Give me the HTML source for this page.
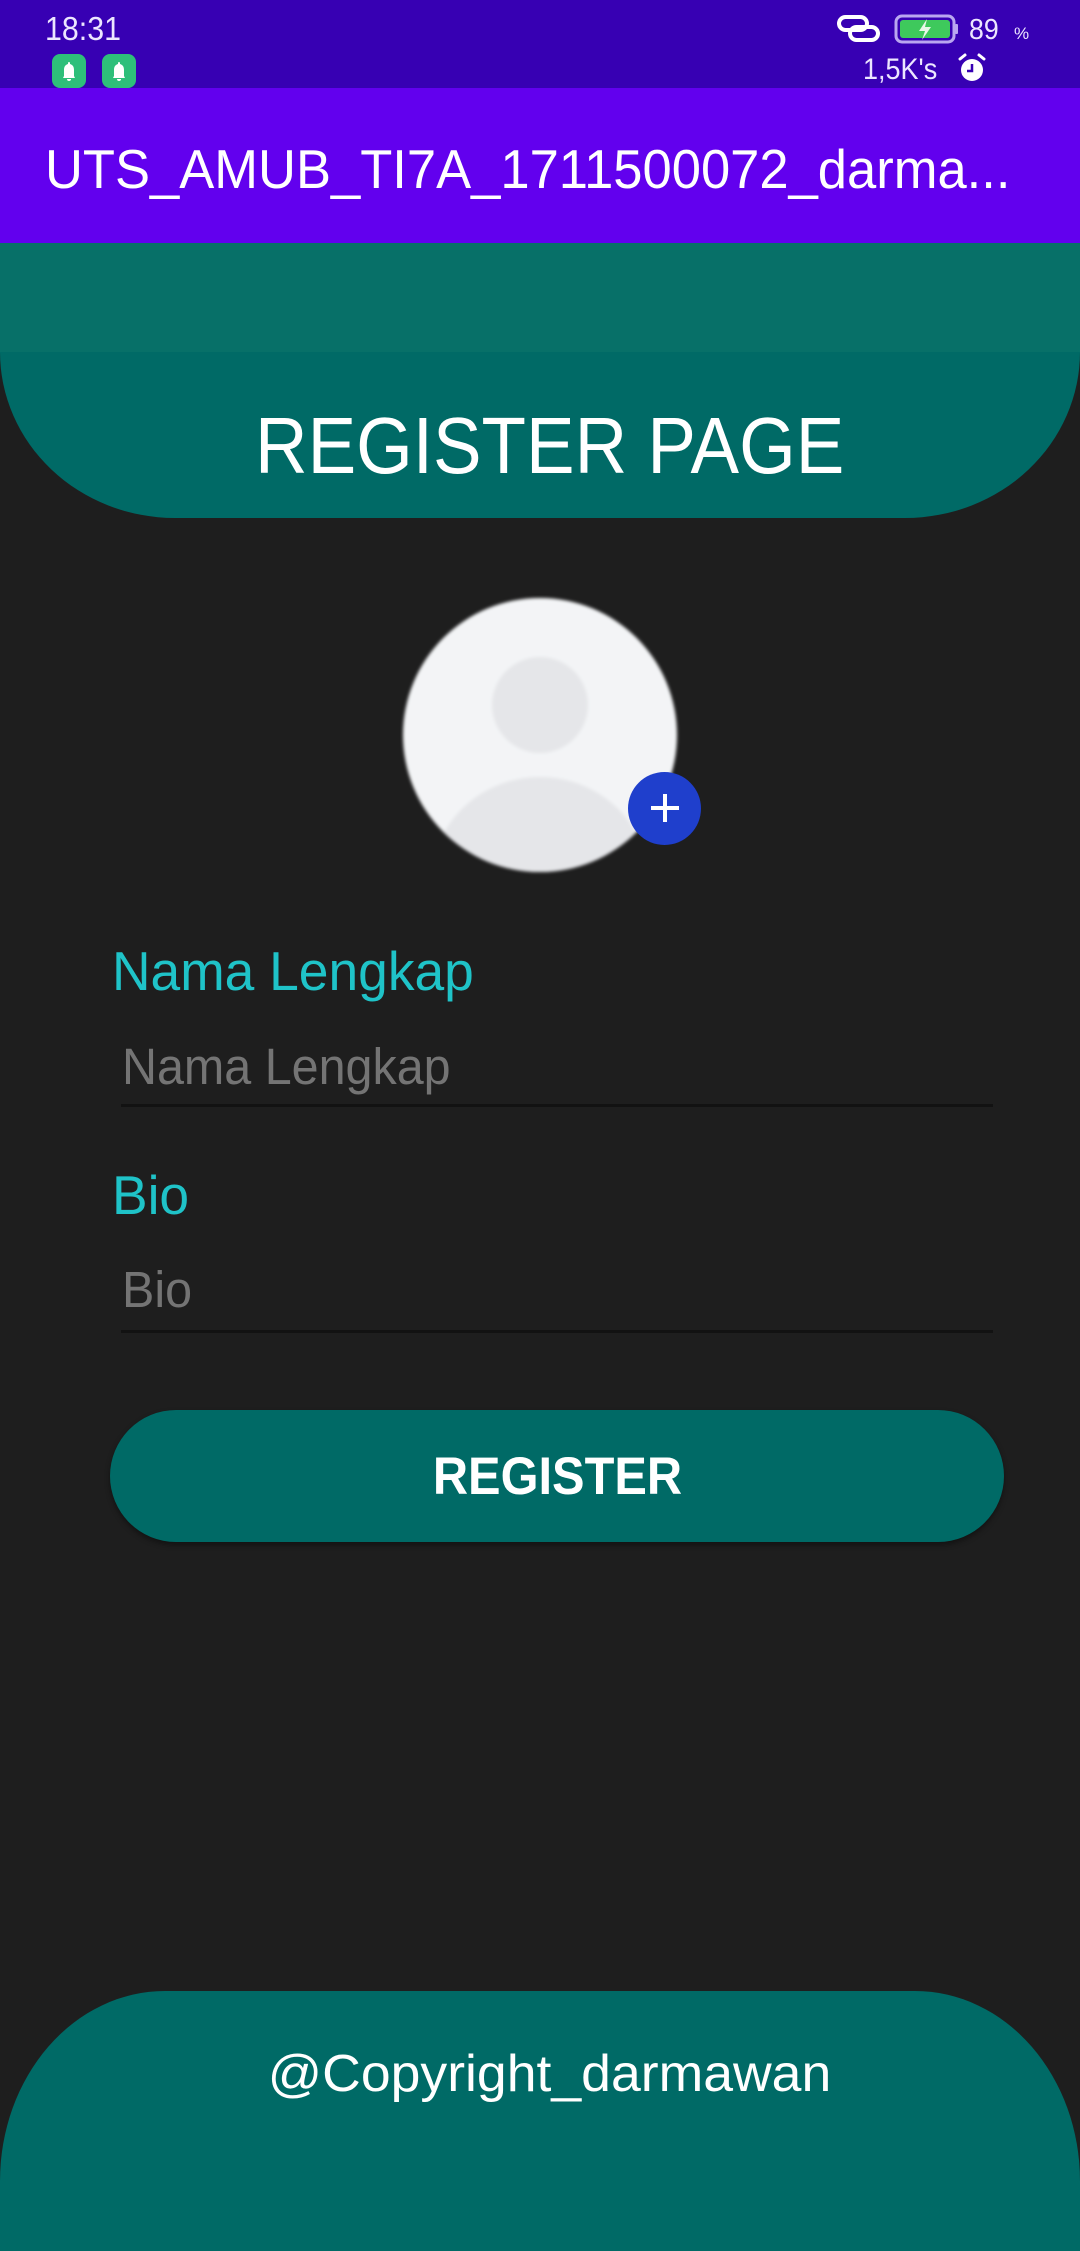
<!DOCTYPE html>
<html><head><meta charset="utf-8">
<style>
*{margin:0;padding:0;box-sizing:border-box}
html,body{width:1080px;height:2156px;overflow:hidden;background:#1e1e1e;font-family:"Liberation Sans",sans-serif}
.abs{position:absolute}
.t{position:absolute;white-space:nowrap;transform-origin:left top;line-height:1}
</style></head><body>
<div class="abs" style="left:0;top:0;width:1080px;height:88px;background:#3700b3"></div>
<div class="t" style="left:45px;top:12px;font-size:33px;color:#ece6ff;transform:scaleX(0.92)">18:31</div>
<div class="abs" style="left:52px;top:54px;width:34px;height:34px;border-radius:8px;background:#2ebf7a"></div>
<div class="abs" style="left:102px;top:54px;width:34px;height:34px;border-radius:8px;background:#2ebf7a"></div>
<svg class="abs" style="left:52px;top:54px" width="34" height="34" viewBox="0 0 34 34"><path d="M17 8c-1 0-1 1-1 2c-3 1-4 3-4 6v6l-1 2h12l-1-2v-6c0-3-1-5-4-6c0-1 0-2-1-2zM15 25a2 2 0 0 0 4 0z" fill="#fff"/></svg>
<svg class="abs" style="left:102px;top:54px" width="34" height="34" viewBox="0 0 34 34"><path d="M17 8c-1 0-1 1-1 2c-3 1-4 3-4 6v6l-1 2h12l-1-2v-6c0-3-1-5-4-6c0-1 0-2-1-2zM15 25a2 2 0 0 0 4 0z" fill="#fff"/></svg>
<svg class="abs" style="left:836px;top:14px" width="46" height="30" viewBox="0 0 46 30"><rect x="3" y="3" width="28" height="13" rx="6.5" fill="none" stroke="#fff" stroke-width="4"/><rect x="14" y="13" width="28" height="13" rx="6.5" fill="none" stroke="#fff" stroke-width="4"/></svg>
<svg class="abs" style="left:894px;top:14px" width="66" height="30" viewBox="0 0 66 30"><rect x="2" y="2" width="58" height="26" rx="6" fill="none" stroke="#b9a6f0" stroke-width="3"/><rect x="6" y="6" width="50" height="18" rx="3" fill="#3ec95c"/><rect x="61" y="10" width="3" height="10" rx="1" fill="#b9a6f0"/><path d="M33 5l-8 12h6l-3 9l9-13h-6z" fill="#e8f7e8"/></svg>
<div class="t" style="left:969px;top:16px;font-size:29px;color:#ece6ff;transform:scaleX(0.92)">89</div>
<div class="t" style="left:1014px;top:25px;font-size:17px;color:#ece6ff">%</div>
<div class="t" style="left:863px;top:55px;font-size:30px;color:#ece6ff;transform:scaleX(0.9)">1,5K's</div>
<svg class="abs" style="left:957px;top:52px" width="30" height="32" viewBox="0 0 30 32"><circle cx="15" cy="18" r="11" fill="#fff"/><path d="M3 7l5-4M27 7l-5-4" stroke="#fff" stroke-width="3" stroke-linecap="round"/><path d="M15 12v7h-5" stroke="#3700b3" stroke-width="2.5" fill="none"/></svg>

<div class="abs" style="left:0;top:88px;width:1080px;height:155px;background:#6200ee"></div>
<div class="t" style="left:45px;top:142px;font-size:55px;color:#fff;transform:scaleX(0.955)">UTS_AMUB_TI7A_1711500072_darma...</div>

<div class="abs" style="left:0;top:243px;width:1080px;height:110px;background:#077068"></div>
<div class="abs" style="left:0;top:352px;width:1080px;height:166px;background:#006a66;border-radius:0 0 175px 175px / 0 0 166px 166px"></div>
<div class="t" style="left:255px;top:406px;font-size:80px;color:#fff;transform:scaleX(0.91)">REGISTER PAGE</div>

<svg class="abs" style="left:400px;top:595px" width="282" height="282" viewBox="0 0 282 282">
<defs><clipPath id="c"><circle cx="140" cy="140" r="137"/></clipPath><filter id="b"><feGaussianBlur stdDeviation="1.5"/></filter></defs>
<g filter="url(#b)"><circle cx="140" cy="140" r="137" fill="#f3f4f6"/>
<g clip-path="url(#c)"><circle cx="140" cy="110" r="48" fill="#e5e6e9"/><ellipse cx="140" cy="285" rx="108" ry="103" fill="#e5e6e9"/></g></g>
</svg>
<div class="abs" style="left:628px;top:772px;width:73px;height:73px;border-radius:50%;background:#1f3fcc"></div>
<div class="abs" style="left:651px;top:806px;width:28px;height:4px;background:#fff"></div>
<div class="abs" style="left:663px;top:794px;width:4px;height:28px;background:#fff"></div>

<div class="t" style="left:112px;top:944px;font-size:55px;color:#1fc3c8;transform:scaleX(0.97)">Nama Lengkap</div>
<div class="t" style="left:122px;top:1041px;font-size:51px;color:#747474;transform:scaleX(0.95)">Nama Lengkap</div>
<div class="abs" style="left:121px;top:1104px;width:872px;height:3px;background:#121212"></div>
<div class="t" style="left:112px;top:1168px;font-size:55px;color:#1fc3c8;transform:scaleX(0.97)">Bio</div>
<div class="t" style="left:122px;top:1264px;font-size:51px;color:#747474;transform:scaleX(0.95)">Bio</div>
<div class="abs" style="left:121px;top:1330px;width:872px;height:3px;background:#121212"></div>

<div class="abs" style="left:110px;top:1410px;width:894px;height:132px;border-radius:66px;background:#006a66;box-shadow:0 3px 6px rgba(0,0,0,.4)"></div>
<div class="abs" style="left:110px;top:1450px;width:894px;text-align:center;font-size:53px;font-weight:bold;color:#fff;line-height:1"><span style="display:inline-block;transform:scaleX(0.92)">REGISTER</span></div>

<div class="abs" style="left:0;top:1991px;width:1080px;height:260px;background:#006a66;border-radius:165px 165px 0 0 / 190px 190px 0 0"></div>
<div class="abs" style="left:0;top:2048px;width:1100px;text-align:center;font-size:52px;color:#fff;line-height:1"><span style="display:inline-block;transform:scaleX(1.03)">@Copyright_darmawan</span></div>
</body></html>
